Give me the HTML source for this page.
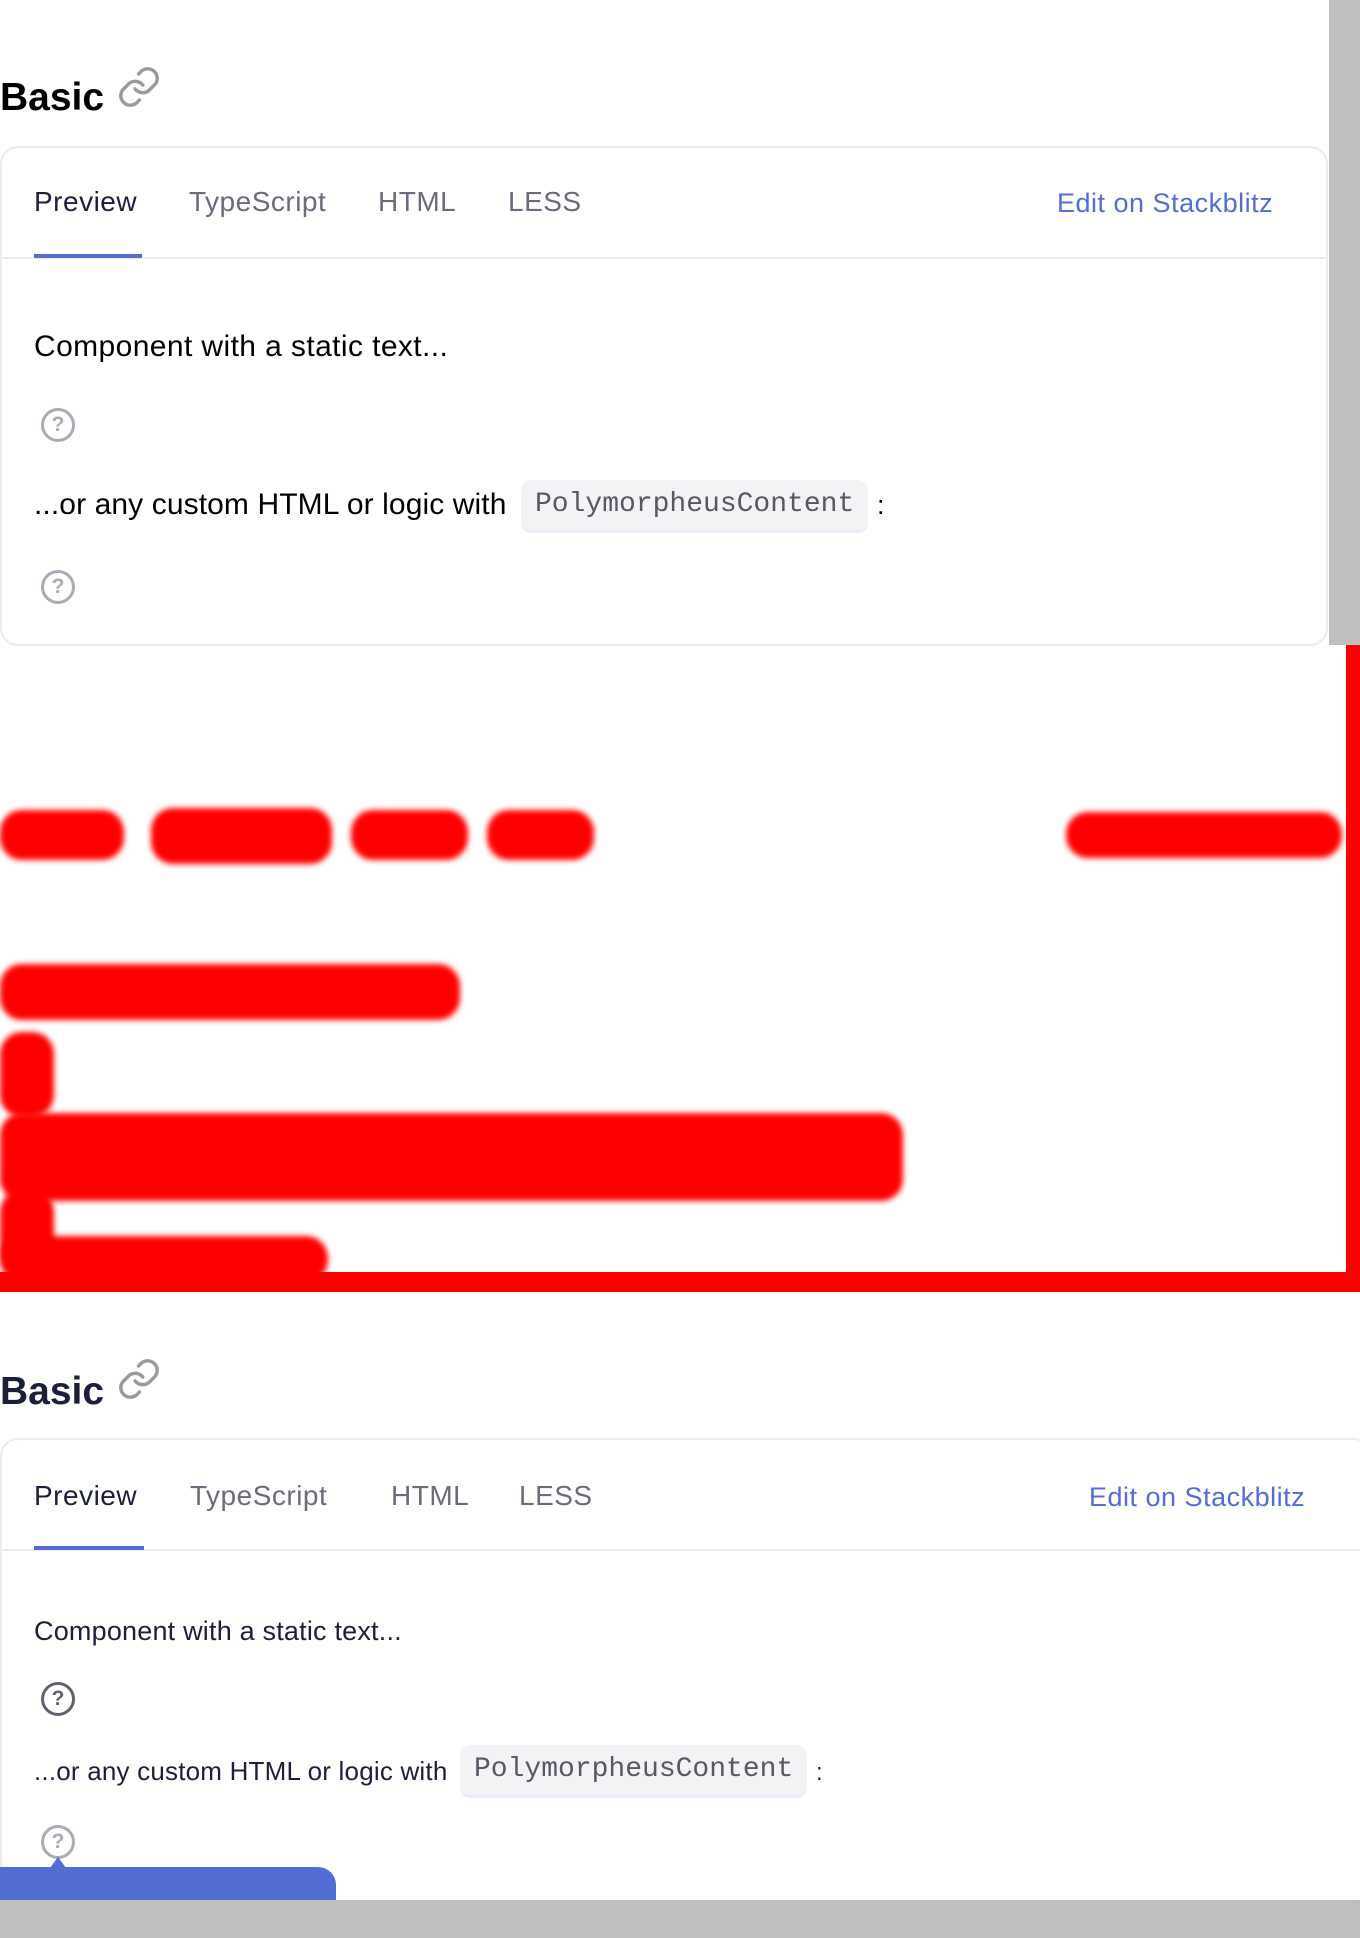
<!DOCTYPE html>
<html><head><meta charset="utf-8"><style>
*{margin:0;padding:0;box-sizing:border-box}
body{width:1360px;height:1938px;position:relative;overflow:hidden;background:#fff;font-family:"Liberation Sans",sans-serif}
.a{position:absolute;white-space:nowrap}
.h{font-weight:bold;font-size:39px;line-height:1}
.card{position:absolute;border:2px solid #ececec;border-radius:18px;background:#fff}
.tab{position:absolute;font-size:28px;letter-spacing:0.5px;color:#6b6c7b;line-height:1}
.code{position:absolute;background:#f3f3f5;border-radius:10px;border-bottom:3px solid #e9edfb;font-family:"Liberation Mono",monospace;font-size:28px;color:#555865;padding:0 14px;line-height:50px}
.q{position:absolute;width:34px;height:34px;border:3px solid #a9abb6;border-radius:50%;color:#a9abb6;font-size:21px;font-weight:bold;text-align:center;line-height:28px}
.r{position:absolute;background:#ff0000;border-radius:22px;filter:blur(3px)}
</style></head><body>
<div class="a" style="left:1329px;top:0;width:31px;height:645px;background:#bfbfbf"></div>
<div class="a h" style="left:0;top:78px;color:#000">Basic</div>
<svg class="a" style="left:116px;top:64px" width="46" height="46" viewBox="0 0 24 24" fill="none" stroke="#9a9a9a" stroke-width="1.8" stroke-linecap="round"><path d="M10 13a5 5 0 0 0 7.5.5l3-3a5 5 0 0 0-7-7l-1.7 1.7"/><path d="M14 11a5 5 0 0 0-7.5-.5l-3 3a5 5 0 0 0 7 7l1.7-1.7"/></svg>
<div class="card" style="left:0;top:146px;width:1328px;height:500px"></div>
<div class="a" style="left:0;top:257px;width:1327px;height:2px;background:#ececec"></div>
<div class="tab" style="left:34px;top:188px;color:#1b1f3b">Preview</div>
<div class="tab" style="left:189px;top:188px">TypeScript</div>
<div class="tab" style="left:378px;top:188px">HTML</div>
<div class="tab" style="left:508px;top:188px">LESS</div>
<div class="tab" style="left:1057px;top:190px;color:#526ed3;font-size:27px">Edit on Stackblitz</div>
<div class="a" style="left:34px;top:254px;width:108px;height:4px;background:#526ed3"></div>
<div class="a" style="left:34px;top:330px;font-size:30px;letter-spacing:0.4px;color:#000">Component with a static text...</div>
<div class="q" style="left:41px;top:408px">?</div>
<div class="a" style="left:34px;top:488px;font-size:30px;letter-spacing:0.1px;color:#000">...or any custom HTML or logic with</div>
<div class="code" style="left:521px;top:480px">PolymorpheusContent</div>
<div class="a" style="left:877px;top:490px;font-size:27px;color:#000">:</div>
<div class="q" style="left:41px;top:570px">?</div>
<div class="r" style="left:0;top:810px;width:124px;height:50px"></div>
<div class="r" style="left:151px;top:808px;width:181px;height:56px"></div>
<div class="r" style="left:351px;top:810px;width:117px;height:50px"></div>
<div class="r" style="left:487px;top:810px;width:107px;height:50px"></div>
<div class="r" style="left:1066px;top:812px;width:276px;height:46px"></div>
<div class="r" style="left:0;top:964px;width:460px;height:56px"></div>
<div class="r" style="left:0;top:1032px;width:54px;height:85px"></div>
<div class="r" style="left:0;top:1113px;width:903px;height:88px"></div>
<div class="r" style="left:0;top:1190px;width:54px;height:80px"></div>
<div class="r" style="left:0;top:1236px;width:328px;height:46px"></div>
<div class="a" style="left:0;top:1272px;width:1360px;height:20px;background:#ff0000"></div>
<div class="a" style="left:1346px;top:645px;width:14px;height:640px;background:#ff0000"></div>
<div class="a h" style="left:0;top:1372px;color:#1b1f3b">Basic</div>
<svg class="a" style="left:116px;top:1356px" width="46" height="46" viewBox="0 0 24 24" fill="none" stroke="#9a9a9a" stroke-width="1.8" stroke-linecap="round"><path d="M10 13a5 5 0 0 0 7.5.5l3-3a5 5 0 0 0-7-7l-1.7 1.7"/><path d="M14 11a5 5 0 0 0-7.5-.5l-3 3a5 5 0 0 0 7 7l1.7-1.7"/></svg>
<div class="card" style="left:0;top:1438px;width:1372px;height:464px"></div>
<div class="a" style="left:0;top:1549px;width:1360px;height:2px;background:#ececec"></div>
<div class="tab" style="left:34px;top:1482px;color:#1b1f3b">Preview</div>
<div class="tab" style="left:190px;top:1482px">TypeScript</div>
<div class="tab" style="left:391px;top:1482px">HTML</div>
<div class="tab" style="left:519px;top:1482px">LESS</div>
<div class="tab" style="left:1089px;top:1484px;color:#526ed3;font-size:27px">Edit on Stackblitz</div>
<div class="a" style="left:34px;top:1546px;width:110px;height:4px;background:#526ed3"></div>
<div class="a" style="left:34px;top:1616px;font-size:27px;letter-spacing:0.2px;color:#1b1f3b">Component with a static text...</div>
<div class="q" style="left:41px;top:1682px;border-color:#5f6270;color:#5f6270">?</div>
<div class="a" style="left:34px;top:1756px;font-size:26px;letter-spacing:0.2px;color:#1b1f3b">...or any custom HTML or logic with</div>
<div class="code" style="left:460px;top:1745px">PolymorpheusContent</div>
<div class="a" style="left:816px;top:1759px;font-size:24px;color:#1b1f3b">:</div>
<div class="q" style="left:41px;top:1825px">?</div>
<div class="a" style="left:0;top:1867px;width:336px;height:35px;background:#526ed3;border-radius:0 18px 0 0"></div>
<div class="a" style="left:50px;top:1857px;width:0;height:0;border-left:8px solid transparent;border-right:8px solid transparent;border-bottom:11px solid #526ed3"></div>
<div class="a" style="left:0;top:1900px;width:1360px;height:38px;background:#bfbfbf"></div>
</body></html>
